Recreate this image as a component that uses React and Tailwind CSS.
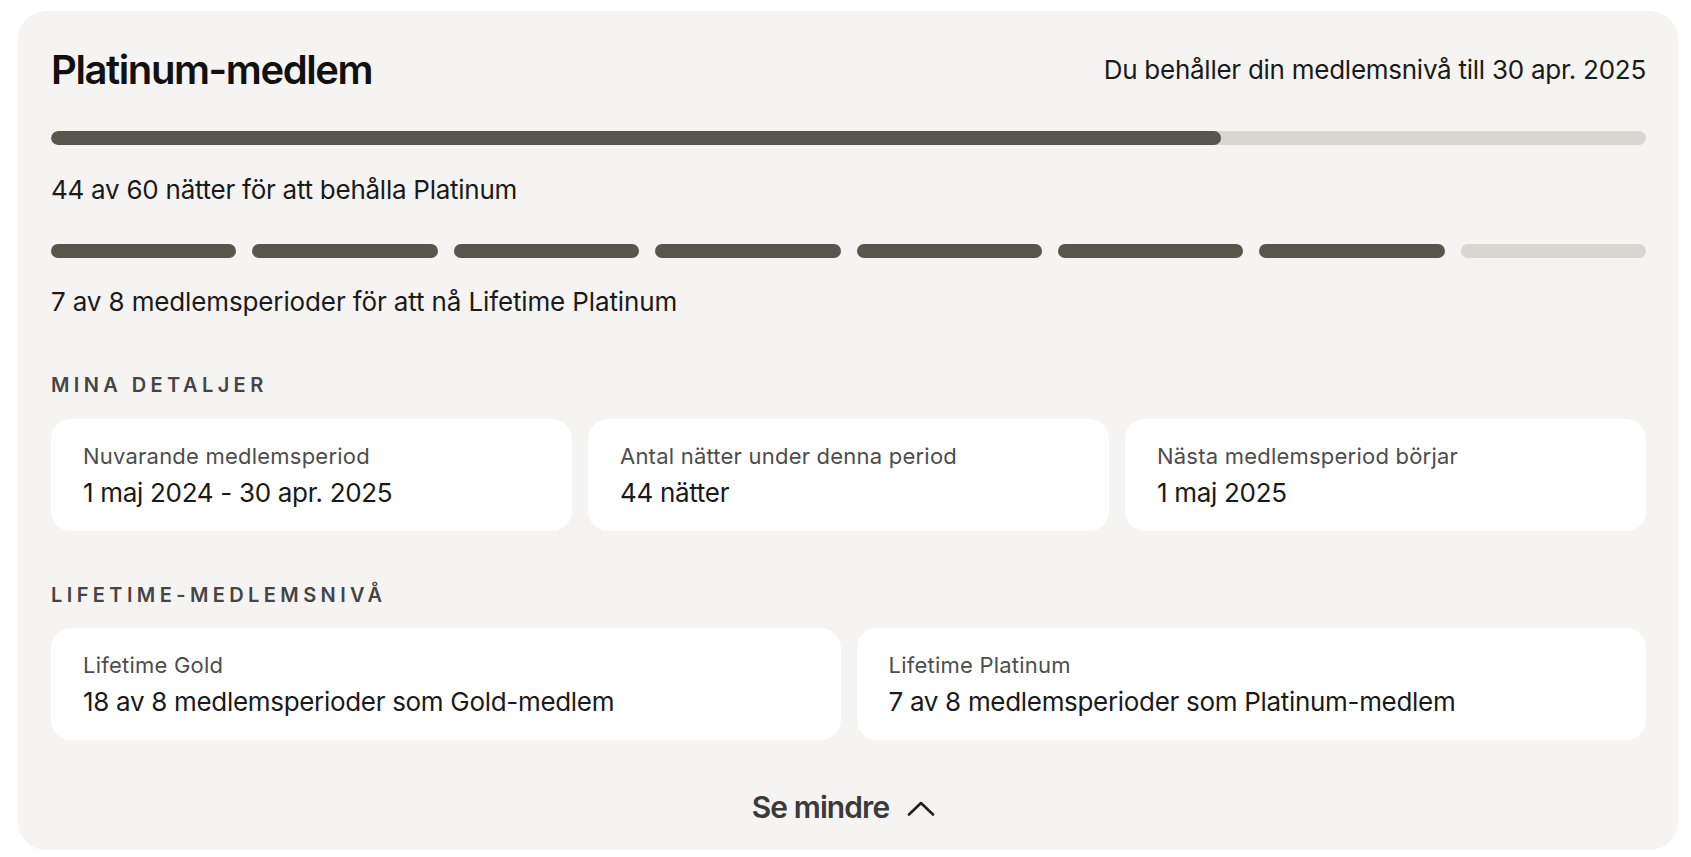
import React from "react";

const NIGHTS = 44;
const NIGHTS_TARGET = 60;
const PERIODS = 7;
const PERIODS_TARGET = 8;

const DETAILS = [
  { label: "Nuvarande medlemsperiod", value: "1 maj 2024 - 30 apr. 2025" },
  { label: "Antal nätter under denna period", value: "44 nätter" },
  { label: "Nästa medlemsperiod börjar", value: "1 maj 2025" },
];

const LIFETIME = [
  { label: "Lifetime Gold", value: "18 av 8 medlemsperioder som Gold-medlem" },
  { label: "Lifetime Platinum", value: "7 av 8 medlemsperioder som Platinum-medlem" },
];

function InfoCard({ label, value }) {
  return (
    <div className="bg-white rounded-[20px] h-[112px] px-8 pt-[23px]">
      <p className="text-[22px] leading-[28px] text-[#4d4d4d] tracking-[0.01em]">{label}</p>
      <p className="mt-[5px] text-[26px] leading-[36px] text-[#1a1a1a] tracking-[-0.012em]">{value}</p>
    </div>
  );
}

function SectionLabel({ children }) {
  return (
    <p className="text-[20px] leading-[24px] font-semibold tracking-[0.22em] text-[#454545]">
      {children}
    </p>
  );
}

export default function App() {
  const pct = (NIGHTS / NIGHTS_TARGET) * 100;

  return (
    <div
      className="pl-[18px] pr-[13px] pt-[11px] pb-[6px] bg-white"
      style={{ fontFamily: "Inter, 'Noto Sans', sans-serif" }}
    >
      <div className="bg-[#f5f4f2] rounded-[28px] pl-[33px] pr-8 pt-[35px] pb-[25px]">
        {/* header */}
        <div className="flex items-center justify-between h-[48px]">
          <h2 className="text-[40px] leading-[48px] font-semibold tracking-[-0.035em] text-[#111]">
            Platinum-medlem
          </h2>
          <p className="text-[26px] leading-[32px] text-[#1a1a1a] tracking-[-0.01em]">
            Du behåller din medlemsnivå till 30 apr. 2025
          </p>
        </div>

        {/* nights bar */}
        <div className="mt-[37px] h-[14px] rounded-full bg-[#d9d6d2] overflow-hidden">
          <div className="h-full rounded-full bg-[#58554f]" style={{ width: `${pct}%` }} />
        </div>
        <p className="mt-[29px] text-[26px] leading-[32px] text-[#1a1a1a] tracking-[-0.01em]">
          44 av 60 nätter för att behålla Platinum
        </p>

        {/* periods */}
        <div className="mt-[38px] grid grid-cols-8 gap-4">
          {Array.from({ length: PERIODS_TARGET }).map((_, i) => (
            <div
              key={i}
              className={`h-[14px] rounded-full ${i < PERIODS ? "bg-[#58554f]" : "bg-[#d9d6d2]"}`}
            />
          ))}
        </div>
        <p className="mt-[28px] text-[26px] leading-[32px] text-[#1a1a1a] tracking-[-0.005em]">
          7 av 8 medlemsperioder för att nå Lifetime Platinum
        </p>

        {/* mina detaljer */}
        <div className="mt-[55px]">
          <SectionLabel>MINA DETALJER</SectionLabel>
        </div>
        <div className="mt-[22px] grid grid-cols-3 gap-4">
          {DETAILS.map((d) => (
            <InfoCard key={d.label} {...d} />
          ))}
        </div>

        {/* lifetime */}
        <div className="mt-[52px]">
          <SectionLabel>LIFETIME-MEDLEMSNIVÅ</SectionLabel>
        </div>
        <div className="mt-[21px] grid grid-cols-2 gap-4">
          {LIFETIME.map((d) => (
            <InfoCard key={d.label} {...d} />
          ))}
        </div>

        {/* toggle */}
        <div className="mt-[49px] flex justify-center">
          <button className="flex items-center gap-[18px] h-[36px] mr-[10px] text-[#3a3a3a]">
            <span className="text-[30px] leading-[36px] font-semibold tracking-[-0.03em]">Se mindre</span>
            <svg width="28" height="16" viewBox="0 0 28 16" fill="none" className="mt-[2px]">
              <path d="M2 14.5 L14 3 L26 14.5" stroke="#1f1f1f" strokeWidth="2.6" strokeLinecap="round" strokeLinejoin="round" />
            </svg>
          </button>
        </div>
      </div>
    </div>
  );
}
